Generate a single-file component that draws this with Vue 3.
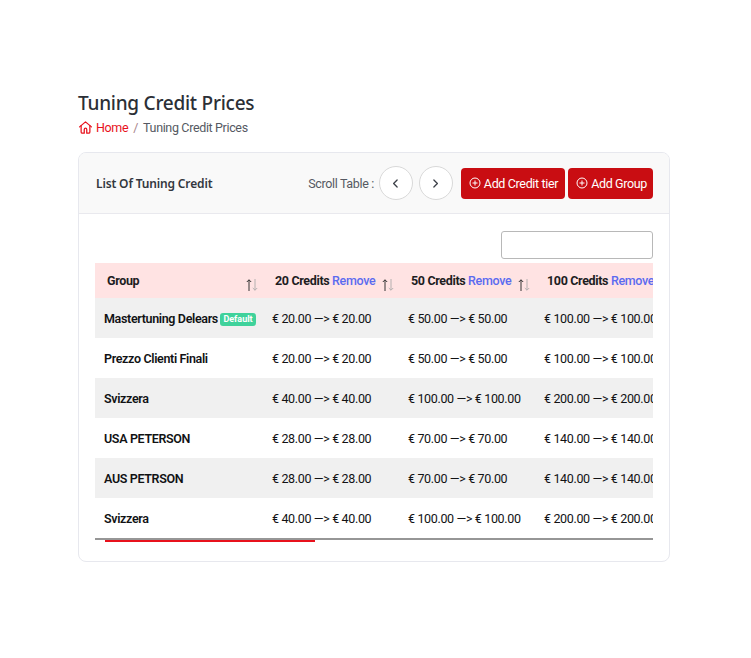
<template>
  <div class="page">
    <h1 class="title">Tuning Credit Prices</h1>
    <nav class="crumbs">
      <svg class="home" viewBox="0 0 24 24" fill="none" stroke="currentColor" stroke-width="2" stroke-linecap="round" stroke-linejoin="round">
        <path d="M2.5 11 12 3l9.5 8" />
        <path d="M5 9v10a2 2 0 0 0 2 2h3v-6a2 2 0 0 1 4 0v6h3a2 2 0 0 0 2-2V9" />
      </svg>
      <a class="home-link">Home</a>
      <span class="sep">/</span>
      <span class="current">Tuning Credit Prices</span>
    </nav>

    <div class="card">
      <div class="card-header">
        <h2 class="card-title">List Of Tuning Credit</h2>
        <div class="tools">
          <span class="scroll-label">Scroll Table :</span>
          <button class="round">
            <svg viewBox="0 0 24 24" fill="none" stroke="currentColor" stroke-width="2.4" stroke-linecap="round" stroke-linejoin="round"><path d="M15 5.5 8.5 12l6.5 6.5" /></svg>
          </button>
          <button class="round next">
            <svg viewBox="0 0 24 24" fill="none" stroke="currentColor" stroke-width="2.4" stroke-linecap="round" stroke-linejoin="round"><path d="M9 5.5 15.5 12 9 18.5" /></svg>
          </button>
          <button class="btn first">
            <svg viewBox="0 0 24 24" fill="none" stroke="currentColor" stroke-width="2"><circle cx="12" cy="12" r="10" /><path d="M12 7v10M7 12h10" /></svg>
            Add Credit tier
          </button>
          <button class="btn">
            <svg viewBox="0 0 24 24" fill="none" stroke="currentColor" stroke-width="2"><circle cx="12" cy="12" r="10" /><path d="M12 7v10M7 12h10" /></svg>
            Add Group
          </button>
        </div>
      </div>

      <div class="card-body">
        <div class="search-row">
          <input class="search" type="text" />
        </div>
        <div class="table-wrap">
          <table>
            <thead>
              <tr>
                <th class="group-col">
                  Group
                  <svg class="sort" viewBox="0 0 12 12" fill="none" stroke-width="1">
                    <path class="up" d="M3 12V0.8M0.8 3 3 0.8 5.2 3" />
                    <path class="down" d="M9 0v11.2M6.8 9 9 11.2 11.2 9" />
                  </svg>
                </th>
                <th v-for="c in tiers" :key="c">
                  {{ c }} Credits <a class="remove">Remove</a>
                  <svg class="sort" viewBox="0 0 12 12" fill="none" stroke-width="1">
                    <path class="up" d="M3 12V0.8M0.8 3 3 0.8 5.2 3" />
                    <path class="down" d="M9 0v11.2M6.8 9 9 11.2 11.2 9" />
                  </svg>
                </th>
              </tr>
            </thead>
            <tbody>
              <tr v-for="row in rows" :key="row.id">
                <td class="name">{{ row.name }}<span v-if="row.isDefault" class="badge">Default</span></td>
                <td v-for="p in row.prices" :key="p">€ {{ p }} —&gt; € {{ p }}</td>
              </tr>
            </tbody>
          </table>
        </div>
        <div class="scrollbar"><div class="thumb"></div></div>
      </div>
    </div>
  </div>
</template>

<script setup>
const tiers = [20, 50, 100]

const rows = [
  { id: 1, name: 'Mastertuning Delears', isDefault: true, prices: ['20.00', '50.00', '100.00'] },
  { id: 2, name: 'Prezzo Clienti Finali', prices: ['20.00', '50.00', '100.00'] },
  { id: 3, name: 'Svizzera', prices: ['40.00', '100.00', '200.00'] },
  { id: 4, name: 'USA PETERSON', prices: ['28.00', '70.00', '140.00'] },
  { id: 5, name: 'AUS PETRSON', prices: ['28.00', '70.00', '140.00'] },
  { id: 6, name: 'Svizzera', prices: ['40.00', '100.00', '200.00'] }
]
</script>

<style>
body {
  background: #fff;
}
</style>

<style scoped>
.page {
  width: 751px;
  height: 658px;
  box-sizing: border-box;
  padding: 90px 81px 0 78px;
  font-family: Roboto, "Liberation Sans", sans-serif;
  letter-spacing: -0.35px;
  overflow: hidden;
}

.title {
  margin: 0;
  font-family: "Noto Sans", sans-serif;
  font-size: 19px;
  line-height: 26px;
  font-weight: 500;
  letter-spacing: -0.25px;
  color: #2b2f36;
}

.crumbs {
  display: flex;
  align-items: center;
  height: 20px;
  margin-top: 1px;
  font-size: 12.5px;
  color: #e8111c;
}

.home {
  width: 15px;
  height: 15px;
  margin-right: 3px;
}

.sep {
  margin: 0 5px;
  color: #a8848a;
}

.current {
  color: #555962;
}

.card {
  margin-top: 15px;
  height: 410px;
  box-sizing: border-box;
  border: 1px solid #e7e8ee;
  border-radius: 8px;
  overflow: hidden;
}

.card-header {
  display: flex;
  align-items: center;
  justify-content: space-between;
  height: 61px;
  box-sizing: border-box;
  padding: 0 16px 0 17px;
  background: #f9f9f9;
  border-bottom: 1px solid #e9e9ee;
}

.card-title {
  margin: 0;
  font-family: "Noto Sans", sans-serif;
  font-size: 12px;
  font-weight: 600;
  letter-spacing: -0.15px;
  color: #33373e;
}

.tools {
  display: flex;
  align-items: center;
}

.scroll-label {
  font-size: 12.5px;
  color: #555962;
  margin-right: 5px;
}

.round {
  display: flex;
  align-items: center;
  justify-content: center;
  width: 34px;
  height: 34px;
  padding: 0;
  background: #fff;
  border: 1px solid #d9d9d9;
  border-radius: 50%;
  color: #3d4149;
}

.round svg {
  width: 13px;
  height: 13px;
}

.next {
  margin-left: 6px;
  margin-right: 8px;
}

.btn {
  display: flex;
  align-items: center;
  gap: 3px;
  height: 31px;
  padding: 0 6px 0 8px;
  border: none;
  border-radius: 4px;
  background: #c90d12;
  color: #fff;
  font-family: inherit;
  font-size: 12.5px;
  letter-spacing: -0.35px;
  white-space: nowrap;
}

.btn svg {
  width: 12px;
  height: 12px;
}

.first {
  margin-right: 3px;
  padding-right: 7px;
}

.card-body {
  padding: 17px 16px 0;
}

.search-row {
  display: flex;
  justify-content: flex-end;
}

.search {
  width: 152px;
  height: 28px;
  box-sizing: border-box;
  border: 1px solid #b8b8b8;
  border-radius: 3px;
  background: #fff;
  outline: none;
}

.table-wrap {
  margin-top: 4px;
  overflow: hidden;
}

table {
  table-layout: fixed;
  width: 577px;
  border-collapse: collapse;
  font-size: 12.5px;
}

th {
  position: relative;
  width: 136px;
  height: 35px;
  box-sizing: border-box;
  padding: 0 0 0 11px;
  background: #ffe3e3;
  color: #1d1d1f;
  font-size: 12.5px;
  font-weight: 700;
  text-align: left;
  white-space: nowrap;
}

.group-col {
  width: 169px;
  padding-left: 12px;
}

.remove {
  color: #5b6bf0;
  font-weight: 500;
}

.sort {
  position: absolute;
  right: 6px;
  bottom: 7px;
  width: 12px;
  height: 12px;
}

.sort .up {
  stroke: #333;
}

.sort .down {
  stroke: #b5b0b0;
}

td {
  height: 40px;
  box-sizing: border-box;
  padding: 0 0 0 8px;
  color: #111214;
  white-space: nowrap;
  overflow: hidden;
}

tbody tr:nth-child(odd) td {
  background: #f0f0f0;
}

td.name {
  padding-left: 9px;
  font-weight: 600;
  font-size: 12.5px;
}

.badge {
  display: inline-block;
  margin-left: 2px;
  padding: 0 3.5px;
  border-radius: 3px;
  background: #3fd29b;
  color: #fff;
  font-size: 9px;
  font-weight: 700;
  line-height: 13px;
  letter-spacing: 0;
  vertical-align: 1px;
}

.scrollbar {
  height: 2px;
  border-top: 2px solid #969696;
}

.thumb {
  width: 210px;
  height: 2px;
  margin-left: 10px;
  background: #e8111c;
}
</style>
